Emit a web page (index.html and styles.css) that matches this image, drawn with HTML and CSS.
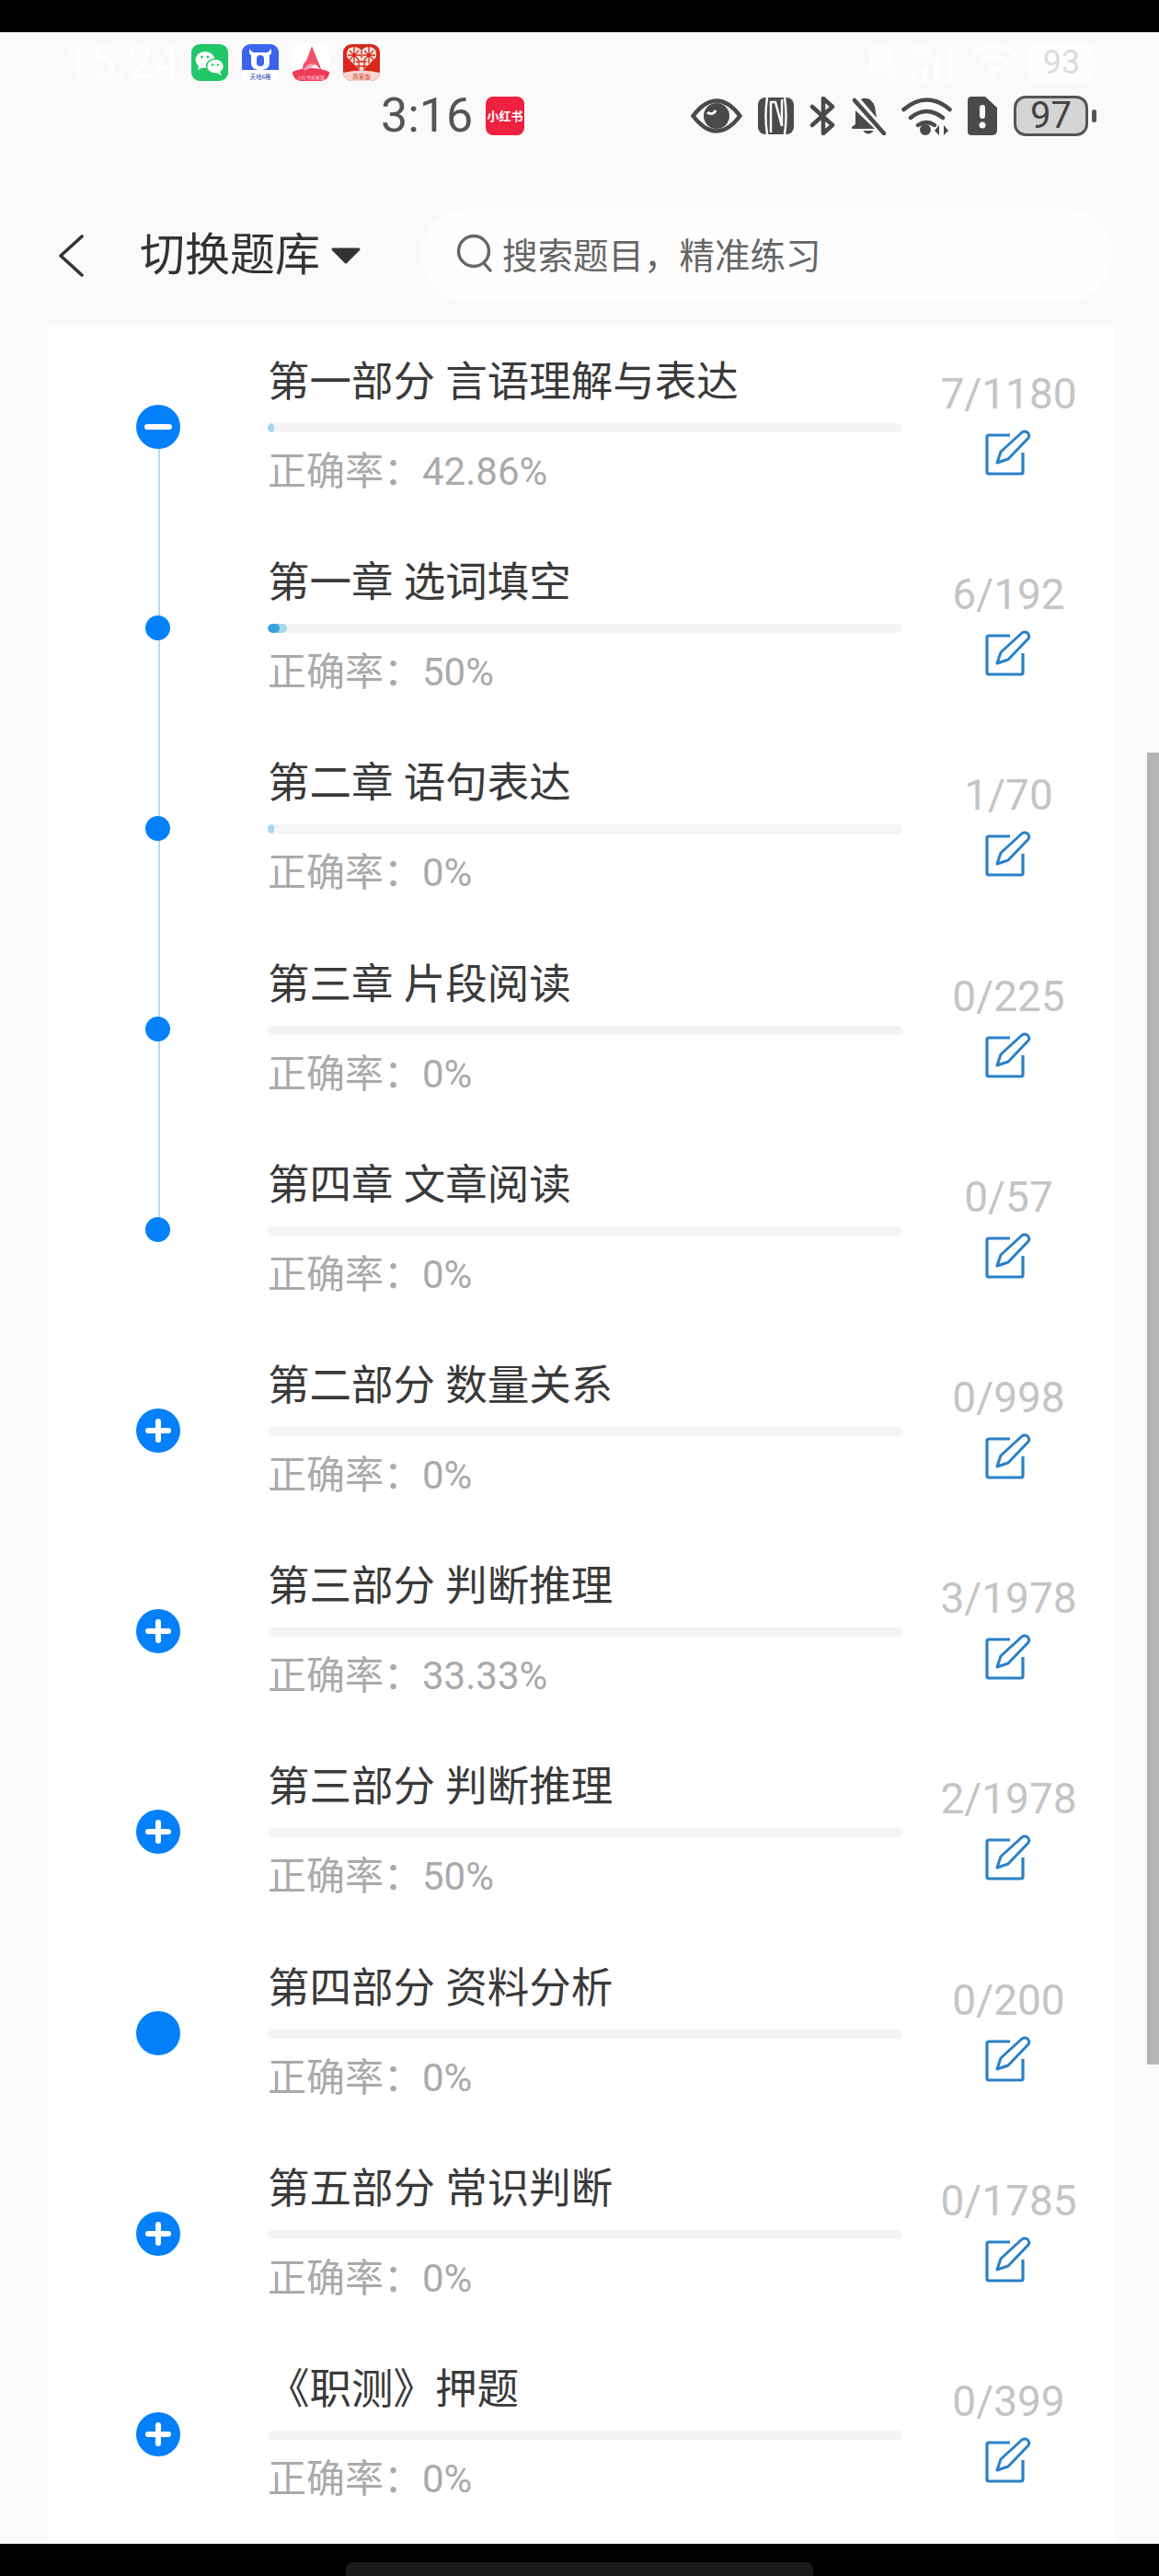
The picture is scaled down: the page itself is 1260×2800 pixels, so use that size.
FILE: index.html
```html
<!DOCTYPE html>
<html lang="zh-CN">
<head>
    <meta charset="UTF-8">
    <meta name="viewport" content="width=device-width, initial-scale=1.0">
    <title>切换题库</title>
    <link rel="stylesheet" href="styles.css">
</head>
<body>

    <svg class="sprites" width="0" height="0">
        <symbol id="edit" viewBox="0 0 50 50">
            <path d="M27 6H4a2 2 0 0 0-2 2v38a2 2 0 0 0 2 2h35a2 2 0 0 0 2-2V25" fill="none" stroke="#2a80c8" stroke-width="3.200"/>
            <path d="M13 36l4-12L40 3q3-2 6 0 3 3 1 6L25 32z" fill="#fff" stroke="#2a80c8" stroke-width="3" stroke-linejoin="round"/>
        </symbol>
    </svg>

    <div class="black-bar"></div>

    <header class="top">
        <!-- ghost of the older status bar, nearly white -->
        <div class="ghost">
            <span class="ghost-time">15:24</span>
            <div class="apps">
                <svg class="app" viewBox="0 0 40 40">
                    <rect width="40" height="40" rx="9" fill="#22c768"/>
                    <ellipse cx="15" cy="17" rx="10.5" ry="9" fill="#fff"/>
                    <path d="M8 23l-1 5 6-3z" fill="#fff"/>
                    <ellipse cx="26" cy="24" rx="9.5" ry="8" fill="#fff" stroke="#22c768" stroke-width="1.5"/>
                    <path d="M31 30l2 4-6-3z" fill="#fff"/>
                    <circle cx="11.500" cy="14" r="1.400" fill="#22c768"/>
                    <circle cx="18" cy="14" r="1.400" fill="#22c768"/>
                    <circle cx="23" cy="22.500" r="1.300" fill="#22c768"/>
                    <circle cx="29" cy="22.500" r="1.300" fill="#22c768"/>
                </svg>
                <svg class="app" viewBox="0 0 40 40">
                    <path d="M0 9a9 9 0 0 1 9-9h22a9 9 0 0 1 9 9v20H0z" fill="#3b63ec"/>
                    <rect y="28" width="40" height="12" fill="#fff"/>
                    <path d="M8 5l4 4h16l4-4v5l-2 2v8c0 6-4 8-10 8s-10-2-10-8v-8l-2-2z" fill="#fff"/>
                    <rect x="16" y="12" width="8" height="12" rx="4" fill="#3b63ec"/>
                    <text class="app-label blue" x="20" y="38">天地6格</text>
                </svg>
                <svg class="app" viewBox="0 0 40 40">
                    <rect width="40" height="40" rx="9" fill="#fff"/>
                    <path d="M0 30q20-8 40 0v1a9 9 0 0 1-9 9H9a9 9 0 0 1-9-9z" fill="#ee3b57"/>
                    <path d="M21 2l11 27-7-7-13 7q-3-6 3-11z" fill="#f25268"/>
                    <path d="M12 29q4-10 13-7l-6 4z" fill="#f9a2ae"/>
                    <text class="app-label white" x="20" y="38">小红书商家版</text>
                </svg>
                <svg class="app" viewBox="0 0 40 40">
                    <rect width="40" height="40" rx="9" fill="#d9271c"/>
                    <path d="M0 31q20-5 40 0a9 9 0 0 1-9 9H9a9 9 0 0 1-9-9z" fill="#f7d5cf"/>
                    <path d="M20 30L4 14Q3 3 12 3q5 0 8 4 3-4 8-4 9 0 8 11z" fill="#f8e2dc"/>
                    <path d="M7 7l10 10M7 17L17 7M23 7l10 10M23 17L33 7M12 3v18M28 3v18M5 12h14M21 12h14M14 19h12M14 24h12M17 17v10M23 17v10M20 7v8" stroke="#d9271c" stroke-width="1.300" fill="none"/>
                    <text class="app-label red" x="20" y="38">商家版</text>
                </svg>
            </div>
            <div class="ghost-icons">
                <svg class="ghost-bell" viewBox="0 0 38 44">
                    <path d="M2 4l32 36M19 4c8 0 12 6 12 14v8l4 6H3l4-6v-8c0-8 4-14 12-14z" fill="#fefefe" stroke="#fefefe" stroke-width="3"/>
                </svg>
                <svg class="ghost-signal" viewBox="0 0 50 44">
                    <text class="ghost-5g" x="0" y="16">5G</text>
                    <path d="M3 36v6M16 30v12M29 20v22M42 8v34" stroke="#fefefe" stroke-width="7" stroke-linecap="round"/>
                </svg>
                <svg class="ghost-wifi" viewBox="0 0 52 44">
                    <path d="M3 13q23-20 46 0M11 22q15-13 30 0M19 31q7-6 14 0" fill="none" stroke="#fefefe" stroke-width="5"/>
                    <circle cx="26" cy="39" r="4" fill="#fefefe"/>
                </svg>
                <span class="ghost-battery">93</span>
            </div>
        </div>

        <div class="status">
            <span class="time">3:16</span>
            <span class="redbook">小红书</span>
            <div class="status-icons">
                <svg class="ic-eye" viewBox="0 0 56 38">
                    <path d="M2.500 19Q15 2.500 28 2.500T53.500 19Q41 35.500 28 35.500T2.500 19z" fill="#fafafa" stroke="#4a4a4a" stroke-width="4.500"/>
                    <circle cx="28" cy="19" r="14" fill="#4a4a4a"/>
                    <path d="M18 15a5.500 5.500 0 0 0 9-2" fill="none" stroke="#fafafa" stroke-width="3"/>
                </svg>
                <svg class="ic-nfc" viewBox="0 0 39 40">
                    <rect width="39" height="40" rx="8" fill="#4a4a4a"/>
                    <path d="M10 0q-3 20 0 40M29 0q3 20 0 40" stroke="#fafafa" stroke-width="2.500" fill="none"/>
                    <path d="M14 38V5h5l7 26V2" stroke="#fafafa" stroke-width="2.500" fill="none"/>
                </svg>
                <svg class="ic-bt" viewBox="0 0 28 42">
                    <path d="M3 11l22 20-10 9V24M3 31l22-20-10-9v14" fill="none" stroke="#4a4a4a" stroke-width="4.500" stroke-linecap="round" stroke-linejoin="round"/>
                </svg>
                <svg class="ic-bell" viewBox="0 0 38 42">
                    <path d="M11 3c5-3 13 0 15 8l2 12zM5 15l21 20H2q-1 0-1-2l4-3z" fill="#4a4a4a"/>
                    <path d="M4 4l32 36" stroke="#4a4a4a" stroke-width="4.500" stroke-linecap="round"/>
                    <path d="M13 37h12q-6 7-12 0z" fill="#4a4a4a"/>
                </svg>
                <svg class="ic-wifi" viewBox="0 0 55 42">
                    <path d="M2.500 14q25-21 50 0M10 23q17-14 35 0M18 31q9-6 18 0" fill="none" stroke="#4a4a4a" stroke-width="4.500" stroke-linecap="round"/>
                    <circle cx="26" cy="36" r="6" fill="#4a4a4a"/>
                    <path d="M41 31v11l-5-5zM46 31v11l5-5z" fill="#4a4a4a"/>
                </svg>
                <svg class="ic-sim" viewBox="0 0 32 42">
                    <path d="M4 0h15l13 12v25a5 5 0 0 1-5 5H4a4 4 0 0 1-4-4V4a4 4 0 0 1 4-4z" fill="#4a4a4a"/>
                    <rect x="13" y="9" width="6" height="15" rx="3" fill="#fafafa"/>
                    <circle cx="16" cy="31" r="3.500" fill="#fafafa"/>
                </svg>
                <div class="battery">
                    <span class="battery-body">97</span>
                    <span class="battery-tip"></span>
                </div>
            </div>
        </div>

        <nav class="nav">
            <svg class="back" viewBox="0 0 28 46">
                <path d="M26 2L3 23l23 21" fill="none" stroke="#333" stroke-width="3.600" stroke-linecap="round" stroke-linejoin="round"/>
            </svg>
            <span class="nav-title">切换题库</span>
            <svg class="caret" viewBox="0 0 32 18">
                <path d="M2 2h28L16 16z" fill="#333" stroke="#333" stroke-width="3" stroke-linejoin="round"/>
            </svg>
            <div class="search">
                <svg class="search-ic" viewBox="0 0 40 42">
                    <circle cx="19" cy="19" r="16.500" fill="none" stroke="#666" stroke-width="3.400"/>
                    <path d="M30 32l7 8" stroke="#666" stroke-width="3.400" stroke-linecap="round"/>
                </svg>
                <span>搜索题目，精准练习</span>
            </div>
        </nav>
    </header>

    <main class="list">
        <div class="row">
            <div class="node line-start"><span class="circle minus"></span></div>
            <div class="main">
                <div class="name">第一部分 言语理解与表达</div>
                <div class="bar"><div class="fill" style="width: 7px"></div></div>
                <div class="rate">正确率：42.86%</div>
            </div>
            <div class="side">
                <div class="count">7/1180</div>
                <svg class="edit"><use href="#edit"/></svg>
            </div>
        </div>
        <div class="row">
            <div class="node line-mid"><span class="dot"></span></div>
            <div class="main">
                <div class="name">第一章 选词填空</div>
                <div class="bar"><div class="fill" style="width: 21px"><div class="fill-right" style="width: 60%"></div></div></div>
                <div class="rate">正确率：50%</div>
            </div>
            <div class="side">
                <div class="count">6/192</div>
                <svg class="edit"><use href="#edit"/></svg>
            </div>
        </div>
        <div class="row">
            <div class="node line-mid"><span class="dot"></span></div>
            <div class="main">
                <div class="name">第二章 语句表达</div>
                <div class="bar"><div class="fill" style="width: 7px"></div></div>
                <div class="rate">正确率：0%</div>
            </div>
            <div class="side">
                <div class="count">1/70</div>
                <svg class="edit"><use href="#edit"/></svg>
            </div>
        </div>
        <div class="row">
            <div class="node line-mid"><span class="dot"></span></div>
            <div class="main">
                <div class="name">第三章 片段阅读</div>
                <div class="bar"></div>
                <div class="rate">正确率：0%</div>
            </div>
            <div class="side">
                <div class="count">0/225</div>
                <svg class="edit"><use href="#edit"/></svg>
            </div>
        </div>
        <div class="row">
            <div class="node line-end"><span class="dot"></span></div>
            <div class="main">
                <div class="name">第四章 文章阅读</div>
                <div class="bar"></div>
                <div class="rate">正确率：0%</div>
            </div>
            <div class="side">
                <div class="count">0/57</div>
                <svg class="edit"><use href="#edit"/></svg>
            </div>
        </div>
        <div class="row">
            <div class="node"><span class="circle plus"></span></div>
            <div class="main">
                <div class="name">第二部分 数量关系</div>
                <div class="bar"></div>
                <div class="rate">正确率：0%</div>
            </div>
            <div class="side">
                <div class="count">0/998</div>
                <svg class="edit"><use href="#edit"/></svg>
            </div>
        </div>
        <div class="row">
            <div class="node"><span class="circle plus"></span></div>
            <div class="main">
                <div class="name">第三部分 判断推理</div>
                <div class="bar"></div>
                <div class="rate">正确率：33.33%</div>
            </div>
            <div class="side">
                <div class="count">3/1978</div>
                <svg class="edit"><use href="#edit"/></svg>
            </div>
        </div>
        <div class="row">
            <div class="node"><span class="circle plus"></span></div>
            <div class="main">
                <div class="name">第三部分 判断推理</div>
                <div class="bar"></div>
                <div class="rate">正确率：50%</div>
            </div>
            <div class="side">
                <div class="count">2/1978</div>
                <svg class="edit"><use href="#edit"/></svg>
            </div>
        </div>
        <div class="row">
            <div class="node"><span class="circle"></span></div>
            <div class="main">
                <div class="name">第四部分 资料分析</div>
                <div class="bar"></div>
                <div class="rate">正确率：0%</div>
            </div>
            <div class="side">
                <div class="count">0/200</div>
                <svg class="edit"><use href="#edit"/></svg>
            </div>
        </div>
        <div class="row">
            <div class="node"><span class="circle plus"></span></div>
            <div class="main">
                <div class="name">第五部分 常识判断</div>
                <div class="bar"></div>
                <div class="rate">正确率：0%</div>
            </div>
            <div class="side">
                <div class="count">0/1785</div>
                <svg class="edit"><use href="#edit"/></svg>
            </div>
        </div>
        <div class="row">
            <div class="node"><span class="circle plus"></span></div>
            <div class="main">
                <div class="name">《职测》押题</div>
                <div class="bar"></div>
                <div class="rate">正确率：0%</div>
            </div>
            <div class="side">
                <div class="count">0/399</div>
                <svg class="edit"><use href="#edit"/></svg>
            </div>
        </div>
    </main>

    <div class="scrollbar"></div>

    <div class="black-bar bottom-bar"><span class="home"></span></div>

</body>
</html>
```

FILE: styles.css
```css
* {
    box-sizing: border-box;
}
body {
    font-family: Roboto, "Noto Sans CJK SC", sans-serif;
    background-color: #fafafa;
    margin: 0;
    width: 1260px;
    height: 2800px;
    display: flex;
    flex-direction: column;
    position: relative;
    overflow: hidden;
}
.sprites {
    position: absolute;
}
.black-bar {
    height: 35px;
    background: #000;
    flex: none;
}
.bottom-bar {
    display: flex;
    justify-content: center;
    align-items: flex-end;
}
.home {
    width: 508px;
    height: 15px;
    background: #1a1a1a;
    border-radius: 8px 8px 0 0;
}

/* header */
.top {
    height: 320px;
    flex: none;
    padding-top: 70px;
    position: relative;
}
.ghost {
    position: absolute;
    top: 13px;
    left: 0;
    width: 100%;
    height: 40px;
}
.ghost-time {
    position: absolute;
    left: 70px;
    top: -4px;
    font-size: 50px;
    line-height: 48px;
    color: #fefefe;
}
.apps {
    position: absolute;
    left: 208px;
    top: 0;
    display: flex;
    gap: 15px;
}
.app {
    width: 40px;
    height: 40px;
}
.app-label {
    font-family: "Noto Sans CJK SC", sans-serif;
    font-size: 6.5px;
    text-anchor: middle;
}
.blue {
    fill: #2b48b8;
}
.white {
    fill: #ffd9de;
    font-size: 5px;
}
.red {
    fill: #c9362b;
}
.ghost-icons {
    position: absolute;
    left: 940px;
    top: -2px;
    display: flex;
    align-items: center;
    gap: 14px;
}
.ghost-bell {
    width: 38px;
    height: 44px;
}
.ghost-signal {
    width: 50px;
    height: 44px;
    margin-left: -2px;
}
.ghost-5g {
    font-size: 18px;
    font-weight: 700;
    fill: #fefefe;
}
.ghost-wifi {
    width: 52px;
    height: 44px;
}
.ghost-battery {
    width: 72px;
    height: 44px;
    background: #fefefe;
    border-radius: 12px;
    margin-left: -2px;
    font-size: 36px;
    line-height: 44px;
    text-align: center;
    color: #dcdcdc;
}

.status {
    height: 42px;
    padding-left: 414px;
    display: flex;
    align-items: center;
    color: #555;
}
.time {
    width: 114px;
    font-size: 52px;
    line-height: 42px;
}
.redbook {
    width: 42px;
    height: 42px;
    background: #ee2140;
    border-radius: 8px;
    color: #fff;
    font-family: "Noto Sans CJK SC", sans-serif;
    font-size: 13px;
    font-weight: 700;
    line-height: 42px;
    text-align: center;
    white-space: nowrap;
}
.status-icons {
    margin-left: 181px;
    display: flex;
    align-items: center;
}
.ic-eye {
    width: 56px;
    height: 38px;
}
.ic-nfc {
    width: 39px;
    height: 40px;
    margin-left: 17px;
}
.ic-bt {
    width: 28px;
    height: 42px;
    margin-left: 17px;
}
.ic-bell {
    width: 38px;
    height: 42px;
    margin-left: 17px;
}
.ic-wifi {
    width: 55px;
    height: 42px;
    margin-left: 17px;
}
.ic-sim {
    width: 32px;
    height: 42px;
    margin-left: 17px;
}
.battery {
    margin-left: 18px;
    display: flex;
    align-items: center;
    gap: 4px;
}
.battery-body {
    width: 81px;
    height: 44px;
    background: #d4d4d4;
    border: 3.5px solid #555;
    border-radius: 13px;
    color: #444;
    font-size: 40px;
    line-height: 37px;
    text-align: center;
}
.battery-tip {
    width: 5px;
    height: 14px;
    background: #555;
    border-radius: 3px;
}

.nav {
    margin-top: 80px;
    height: 101px;
    display: flex;
    align-items: center;
    padding-left: 63px;
}
.back {
    width: 28px;
    height: 46px;
}
.nav-title {
    margin-left: 61px;
    font-size: 49px;
    line-height: 60px;
    color: #333;
}
.caret {
    margin-left: 12px;
    width: 32px;
    height: 18px;
}
.search {
    margin-left: 66px;
    width: 751px;
    height: 101px;
    background: #fefefe;
    border-radius: 50px;
    display: flex;
    align-items: center;
    padding: 0 0 5px 38px;
    gap: 10px;
    font-size: 38.5px;
    color: #666;
}
.search-ic {
    width: 40px;
    height: 42px;
}

/* list */
.list {
    flex: 1;
    margin-left: 52px;
    width: 1160px;
    background: #fff;
    overflow: hidden;
}
.row {
    height: 218.2px;
    display: grid;
    grid-template-columns: 239px 690px 1fr;
}
.node {
    position: relative;
    display: flex;
    align-items: center;
    justify-content: center;
}
.node::after {
    content: "";
    position: absolute;
    left: 120px;
    width: 2px;
    background: #b7dcf6;
}
.line-start::after {
    top: 50%;
    bottom: 0;
}
.line-mid::after {
    top: 0;
    bottom: 0;
}
.line-end::after {
    top: 0;
    bottom: 50%;
}
.circle {
    width: 48px;
    height: 48px;
    background: #0580fb;
    border-radius: 50%;
    position: relative;
    z-index: 1;
}
.minus::before,
.plus::before,
.plus::after {
    content: "";
    position: absolute;
    left: 9px;
    top: 21px;
    width: 30px;
    height: 6px;
    border-radius: 3px;
    background: #fff;
}
.plus::before {
    left: 10px;
    width: 28px;
}
.plus::after {
    left: 21px;
    top: 11px;
    width: 6px;
    height: 26px;
}
.dot {
    width: 27px;
    height: 27px;
    background: #0580fb;
    border-radius: 50%;
    position: relative;
    z-index: 1;
}

.main {
    padding-top: 31px;
}
.name {
    font-size: 45.5px;
    line-height: 60px;
    color: #3a3a3a;
    white-space: nowrap;
}
.bar {
    margin-top: 14px;
    height: 10px;
    background: #f4f4f4;
    border-radius: 5px;
    overflow: hidden;
}
.fill {
    height: 100%;
    background: #a5d8ec;
    border-radius: 5px;
    overflow: hidden;
}
.fill-right {
    height: 100%;
    background: #3aa2db;
    border-radius: 5px;
}
.rate {
    margin-top: 18px;
    font-size: 42px;
    line-height: 50px;
    color: #aaa;
}

.side {
    padding-top: 48px;
    display: flex;
    flex-direction: column;
    align-items: center;
}
.count {
    font-size: 46px;
    line-height: 50px;
    color: #c4c4c4;
}
.edit {
    margin-top: 14px;
    margin-right: 2px;
    width: 50px;
    height: 50px;
}

.scrollbar {
    position: absolute;
    right: 0;
    top: 818px;
    width: 13px;
    height: 1426px;
    background: #b4b4b4;
}
```
